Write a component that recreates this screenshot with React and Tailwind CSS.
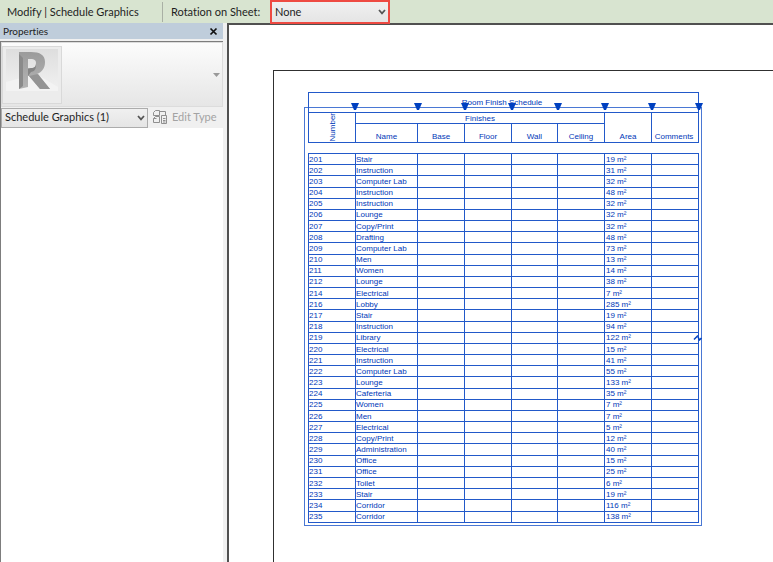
import React from "react";

const rooms = [
  ["201", "Stair", "19 m²"],
  ["202", "Instruction", "31 m²"],
  ["203", "Computer Lab", "32 m²"],
  ["204", "Instruction", "48 m²"],
  ["205", "Instruction", "32 m²"],
  ["206", "Lounge", "32 m²"],
  ["207", "Copy/Print", "32 m²"],
  ["208", "Drafting", "48 m²"],
  ["209", "Computer Lab", "73 m²"],
  ["210", "Men", "13 m²"],
  ["211", "Women", "14 m²"],
  ["212", "Lounge", "38 m²"],
  ["214", "Electrical", "7 m²"],
  ["216", "Lobby", "285 m²"],
  ["217", "Stair", "19 m²"],
  ["218", "Instruction", "94 m²"],
  ["219", "Library", "122 m²"],
  ["220", "Electrical", "15 m²"],
  ["221", "Instruction", "41 m²"],
  ["222", "Computer Lab", "55 m²"],
  ["223", "Lounge", "133 m²"],
  ["224", "Caferteria", "35 m²"],
  ["225", "Women", "7 m²"],
  ["226", "Men", "7 m²"],
  ["227", "Electrical", "5 m²"],
  ["228", "Copy/Print", "12 m²"],
  ["229", "Administration", "40 m²"],
  ["230", "Office", "15 m²"],
  ["231", "Office", "25 m²"],
  ["232", "Toilet", "6 m²"],
  ["233", "Stair", "19 m²"],
  ["234", "Corridor", "116 m²"],
  ["235", "Corridor", "138 m²"],
];

const grips = [47, 110, 157, 204, 250, 297, 344, 391];

function Chevron({ className }) {
  return (
    <svg viewBox="0 0 8 6" className={className} fill="none" stroke="#555" strokeWidth="1.7" aria-hidden="true">
      <path d="M1 1l3 3.4L7 1" />
    </svg>
  );
}

function OptionsBar() {
  return (
    <header className="flex h-[23px] items-center bg-[#d8e4d0] text-[11px]">
      <span className="w-[162px] shrink-0 pt-px pl-[7px] whitespace-nowrap">Modify | Schedule Graphics</span>
      <span className="h-5 w-px shrink-0 bg-[#a9b0a5]" />
      <label htmlFor="rotation" className="w-[107px] shrink-0 pt-px pl-2 whitespace-nowrap">Rotation on Sheet:</label>
      <div className="relative h-6 w-[120px] shrink-0">
        <select id="rotation" className="h-full w-full appearance-none border-2 border-[#ee4a42] bg-linear-to-b from-[#f0f0f0] to-[#e5e5e5] pt-px pl-[3px] outline-none">
          <option>None</option>
        </select>
        <Chevron className="pointer-events-none absolute top-[9px] right-[4px] h-[6px] w-2" />
      </div>
    </header>
  );
}

function RevitLogo() {
  return (
    <svg viewBox="0 0 60 58" className="h-[58px] w-[60px]" aria-hidden="true">
      <defs>
        <linearGradient id="tile" x1="0" y1="0" x2="0" y2="1">
          <stop offset="0" stopColor="#dedede" />
          <stop offset="1" stopColor="#efefef" />
        </linearGradient>
        <linearGradient id="face" x1="0" y1="0" x2="0" y2="1">
          <stop offset="0" stopColor="#9b9b9b" />
          <stop offset="1" stopColor="#b4b4b4" />
        </linearGradient>
      </defs>
      <rect x="0.5" y="0.5" width="59" height="57" fill="#ececec" stroke="#d9d9d9" />
      <path d="M4 3h52v38L4 36z" fill="url(#tile)" />
      <path d="M4 36l30-8 22 13v4H4z" fill="#f3f3f3" />
      <path fillRule="evenodd" d="M17 6h12c9 0 14 3 14 10 0 6-3 10-8 12l13 15H38L27 30h-1v11l-9 2zM26 13v9h3c4 0 5-2 5-5 0-3-2-4-5-4z" fill="url(#face)" />
      <path d="M26 23l3-1c4 0 5-2 5-5 0 5 0 8-5 9l-3 4z" fill="#858585" />
      <path d="M27 30l9-2 12 15H38z" fill="#949494" />
      <path d="M17 8l4 4v28l-4 3z" fill="#8a8a8a" />
    </svg>
  );
}

function PropertiesPanel() {
  return (
    <aside className="flex w-[223px] shrink-0 flex-col">
      <div className="flex h-4 items-center justify-between bg-[#bfcddb] pr-[5px] pl-[3px] text-[10px]">
        <h2>Properties</h2>
        <button type="button" aria-label="Close" className="flex h-3 w-[9px] items-center">
          <svg viewBox="0 0 9 9" className="h-[9px] w-[9px]" stroke="#111" strokeWidth="1.7">
            <path d="M1.500 1.500l6 6M7.500 1.500l-6 6" />
          </svg>
        </button>
      </div>
      <div className="h-[2px] bg-[#f0f0f0]" />
      <div className="flex grow flex-col border-t border-l border-[#7d7d7d] bg-white">
        <button type="button" aria-label="Type selector" className="flex h-[65px] items-center justify-between border border-[#dcdcdc] bg-linear-to-b from-[#fcfcfc] to-[#e6e6e6] pr-[2px]">
          <RevitLogo />
          <svg viewBox="0 0 7 4" className="h-1 w-[7px]" fill="#999" aria-hidden="true">
            <path d="M0 0h7L3.500 4z" />
          </svg>
        </button>
        <div className="flex h-[21px] items-center bg-[#f0f0f0] text-[11px]">
          <div className="relative h-5 w-[147px] shrink-0">
            <select aria-label="Selected elements" className="h-full w-full appearance-none border border-[#acacac] bg-linear-to-b from-[#f0f0f0] to-[#e5e5e5] pl-[3px] outline-none">
              <option>Schedule Graphics (1)</option>
            </select>
            <Chevron className="pointer-events-none absolute top-[7px] right-[3px] h-[6px] w-2" />
          </div>
          <button type="button" disabled className="flex items-center gap-1 pl-[5px] whitespace-nowrap text-[#a3a3a3]">
            <svg viewBox="0 0 15 15" className="h-[15px] w-[15px]" fill="none" stroke="#8f8f8f" aria-hidden="true">
              <path d="M0.500 2.500L2.500 0.500h4v5h-6zM6.500 5V1.500h6v4M0.500 8.500l2-2h4v6h-6v-4h3M8.500 5.500h5v8h-5zM10 8.500h2.500M10 10.500h2.500M10 12h2.500" />
            </svg>
            Edit Type
          </button>
        </div>
      </div>
    </aside>
  );
}

const cell = "border border-[#2259c9] p-0";

function Columns() {
  return (
    <colgroup>
      <col className="w-[47px]" />
      <col className="w-[62px]" />
      <col className="w-[47px]" />
      <col className="w-[47px]" />
      <col className="w-[46px]" />
      <col className="w-[47px]" />
      <col className="w-[47px]" />
      <col className="w-[47px]" />
    </colgroup>
  );
}

function Schedule() {
  return (
    <div className="relative w-[398px] pb-[3px] pl-1 font-['Liberation_Sans',Arial,sans-serif] text-[8px] leading-[9px] text-[#0038b8]">
      <div className="absolute inset-x-0 top-[15px] bottom-0 border border-[#4a78d4]" />
      <table className="relative w-[391px] table-fixed border-collapse">
        <caption className="h-5 border border-b-0 border-[#2259c9] pt-[5px] pr-[3px] text-center">Room Finish Schedule</caption>
        <Columns />
        <thead>
          <tr className="h-[11px]">
            <th scope="col" rowSpan={2} className={cell + " font-normal"}>
              <span className="flex h-[29px] items-center justify-center">
                <span className="rotate-180 [writing-mode:vertical-rl]">Number</span>
              </span>
            </th>
            <th scope="colgroup" colSpan={5} className={cell + " font-normal"}>Finishes</th>
            <th scope="col" rowSpan={2} className={cell + " pb-px align-bottom font-normal"}>Area</th>
            <th scope="col" rowSpan={2} className={cell + " pr-[2px] pb-px align-bottom font-normal"}>Comments</th>
          </tr>
          <tr className="h-[19px]">
            {["Name", "Base", "Floor", "Wall", "Ceiling"].map((name) => (
              <th key={name} scope="col" className={cell + " pb-px align-bottom font-normal"}>{name}</th>
            ))}
          </tr>
        </thead>
      </table>
      <table aria-label="Room Finish Schedule rows" className="relative mt-[10px] h-[370px] w-[391px] table-fixed border-collapse">
        <Columns />
        <tbody>
          {rooms.map(([number, name, area]) => (
            <tr key={number}>
              <td className={cell}>{number}</td>
              <td className={cell}>{name}</td>
              <td className={cell} />
              <td className={cell} />
              <td className={cell} />
              <td className={cell} />
              <td className={cell + " pl-px"}>{area}</td>
              <td className={cell} />
            </tr>
          ))}
        </tbody>
      </table>
      <div className="absolute top-[11px] left-1">
        {grips.map((x) => (
          <svg key={x} viewBox="0 0 8 7" style={{ left: x - 4 }} className="absolute top-0 h-[7px] w-2" fill="#0040c0" aria-hidden="true">
            <path d="M0 0h8L5 7H3z" />
          </svg>
        ))}
      </div>
      <svg viewBox="0 0 9 8" className="absolute top-[242px] right-0 h-2 w-[9px]" stroke="#0040c0" strokeWidth="1.500" fill="none" aria-hidden="true">
        <path d="M1 5.500l4-4M5 3l1.500 3M6 6.500l2.500-2.500" />
      </svg>
    </div>
  );
}

export default function App() {
  return (
    <div className="flex h-screen flex-col overflow-hidden bg-[#f0f0f0] font-[Lato,'Open_Sans',sans-serif] text-[#1e1e1e] [font-variant-ligatures:none]">
      <OptionsBar />
      <div className="flex min-h-0 grow">
        <PropertiesPanel />
        <main className="ml-1 min-w-0 grow overflow-hidden border-t-2 border-l-2 border-[#505050] bg-white pt-[45px] pl-11">
          <div className="h-full border-t border-l border-[#303030] pt-[21px] pl-[30px]">
            <Schedule />
          </div>
        </main>
      </div>
    </div>
  );
}
